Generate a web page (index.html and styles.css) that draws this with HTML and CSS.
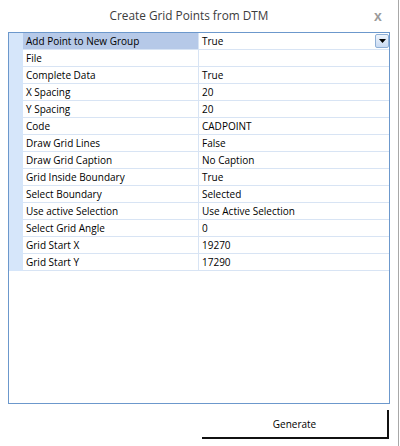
FILE: index.html
```html
<!DOCTYPE html>
<html>
<head>
<meta charset="utf-8">
<link rel="stylesheet" href="styles.css">
</head>
<body>
<div class="window">
  <div class="titlebar">
    <span class="title">Create Grid Points from DTM</span>
    <span class="close">x</span>
  </div>
  <div class="grid-box">
    <div class="grid">
      <div class="gutter"></div><div class="name selected">Add Point to New Group</div><div class="value first"><span>True</span><span class="dd"><svg width="7" height="4" viewBox="0 0 7 4"><path d="M0 0H7L3.5 4Z" fill="#000"/></svg></span></div>
      <div class="gutter"></div><div class="name">File</div><div class="value"></div>
      <div class="gutter"></div><div class="name">Complete Data</div><div class="value">True</div>
      <div class="gutter"></div><div class="name">X Spacing</div><div class="value">20</div>
      <div class="gutter"></div><div class="name">Y Spacing</div><div class="value">20</div>
      <div class="gutter"></div><div class="name">Code</div><div class="value">CADPOINT</div>
      <div class="gutter"></div><div class="name">Draw Grid Lines</div><div class="value">False</div>
      <div class="gutter"></div><div class="name">Draw Grid Caption</div><div class="value">No Caption</div>
      <div class="gutter"></div><div class="name">Grid Inside Boundary</div><div class="value">True</div>
      <div class="gutter"></div><div class="name">Select Boundary</div><div class="value">Selected</div>
      <div class="gutter"></div><div class="name">Use active Selection</div><div class="value">Use Active Selection</div>
      <div class="gutter"></div><div class="name">Select Grid Angle</div><div class="value">0</div>
      <div class="gutter"></div><div class="name">Grid Start X</div><div class="value">19270</div>
      <div class="gutter"></div><div class="name">Grid Start Y</div><div class="value">17290</div>
    </div>
  </div>
  <div class="footer">
    <button class="generate">Generate</button>
  </div>
</div>
</body>
</html>
```

FILE: styles.css
```css
html, body {
  margin: 0;
  padding: 0;
  background: #fff;
}
.window {
  width: 398px;
  height: 446px;
  border-right: 1px solid #a8a8a8;
  background: #fff;
  font-family: "Open Sans", "Noto Sans", sans-serif;
  box-sizing: content-box;
  display: flex;
  flex-direction: column;
}
.titlebar {
  height: 32px;
  position: relative;
  display: flex;
  align-items: center;
  justify-content: center;
}
.title {
  font-size: 11.8px;
  color: #3c3c3c;
  margin-left: -20px;
  margin-top: -2px;
}
.close {
  position: absolute;
  left: 374px;
  top: 8px;
  font-size: 14px;
  font-weight: bold;
  color: #9a9a9a;
  font-family: "Liberation Sans", sans-serif;
}
.grid-box {
  margin-left: 8px;
  width: 380px;
  height: 370px;
  border: 1px solid #6c98cc;
}
.grid {
  display: grid;
  grid-template-columns: 14px 176px 1fr;
  grid-auto-rows: 17px;
  font-size: 10px;
  color: #000;
}
.gutter {
  background: #d6e6fa;
}
.name, .value {
  border-bottom: 1px solid #d8e4f4;
  box-sizing: border-box;
  padding-left: 3px;
  line-height: 16px;
  white-space: nowrap;
}
.name {
  border-right: 1px solid #d8e4f4;
}
.name.selected {
  background: #b6c9e8;
}
.value.first {
  display: flex;
  justify-content: space-between;
  align-items: center;
}
.dd {
  width: 14px;
  height: 14px;
  box-sizing: border-box;
  border: 1px solid #8eafd6;
  border-radius: 2px;
  background: linear-gradient(#eef4fc, #c8daf2);
  display: flex;
  align-items: center;
  justify-content: center;
}
.footer {
  display: flex;
  justify-content: flex-end;
  padding-right: 9px;
  margin-top: 6px;
}
.generate {
  width: 187px;
  height: 29px;
  background: #fff;
  border: none;
  border-right: 2px solid #111;
  border-bottom: 2px solid #111;
  font-family: "Open Sans", "Noto Sans", sans-serif;
  font-size: 10px;
  color: #000;
  padding: 0;
}
```
